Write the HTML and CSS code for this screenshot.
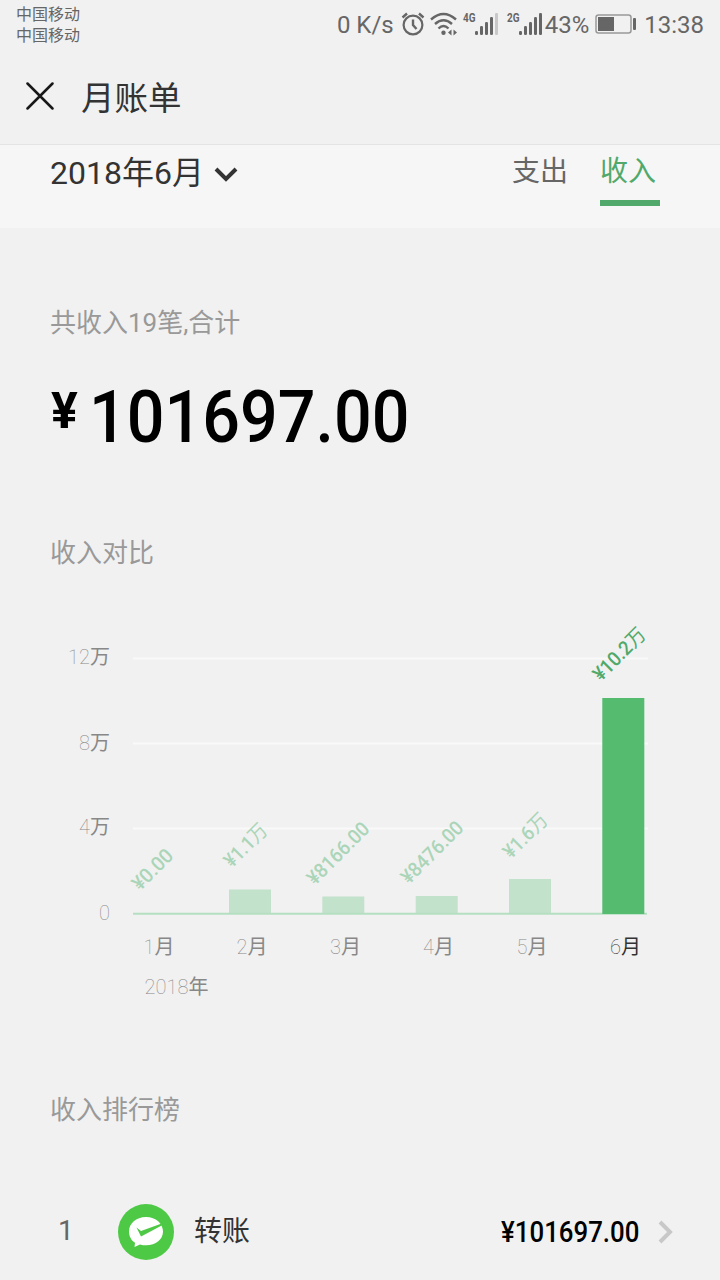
FILE: index.html
```html
<!DOCTYPE html>
<html lang="zh-CN">
<head>
    <meta charset="utf-8">
    <title>月账单</title>
    <link rel="stylesheet" href="styles.css">
</head>
<body>
<div class="status">
    <div class="carriers">中国移动<br>中国移动</div>
    <div class="indicators">
        <span class="speed">0 K/s</span>
        <svg class="alarm" width="24" height="26" viewBox="0 0 24 26" fill="none" stroke="#666" stroke-width="2.2">
            <circle cx="12" cy="14" r="9.4"/>
            <path d="M12 8.5V14l3.5 4M1.5 6.5l4.5-4M22.5 6.5l-4.5-4" stroke-width="2.4"/>
        </svg>
        <svg class="wifi" width="28" height="26" viewBox="0 0 28 26" fill="none" stroke="#666" stroke-width="2.4">
            <path d="M1 8.5Q13.5-2.5 26 8.5M5 13Q13.5 5.5 22 13M8.5 17.5Q13.5 12.5 18.5 17.5"/>
            <circle cx="13.5" cy="21.8" r="2.2" fill="#666" stroke="none"/>
            <path d="M18 21.5l3.5-3v6zM27 21.5l-3.5-3v6z" fill="#666" stroke="none"/>
        </svg>
        <svg class="signal" width="38" height="26" viewBox="0 0 38 26" fill="#666">
            <text class="net" x="1" y="11" textLength="12.5" lengthAdjust="spacingAndGlyphs">4G</text>
            <rect x="13" y="20" width="3" height="4" rx="1.2"/>
            <rect x="18" y="15" width="3" height="9" rx="1.2"/>
            <rect x="23" y="11" width="3" height="13" rx="1.2"/>
            <rect x="28" y="6" width="3" height="18" rx="1.2"/>
            <rect x="33" y="2" width="3" height="22" rx="1.2" fill="#c8c8c8"/>
        </svg>
        <svg class="signal signal-2g" width="38" height="26" viewBox="0 0 38 26" fill="#666">
            <text class="net" x="1" y="11" textLength="12.5" lengthAdjust="spacingAndGlyphs">2G</text>
            <rect x="13" y="20" width="3" height="4" rx="1.2"/>
            <rect x="18" y="15" width="3" height="9" rx="1.2"/>
            <rect x="23" y="11" width="3" height="13" rx="1.2"/>
            <rect x="28" y="6" width="3" height="18" rx="1.2"/>
            <rect x="33" y="2" width="3" height="22" rx="1.2"/>
        </svg>
        <span class="percent">43%</span>
        <svg class="battery" width="42" height="20" viewBox="0 0 42 20">
            <rect x="1" y="1" width="35" height="18" rx="2.5" fill="none" stroke="#999" stroke-width="1.5"/>
            <rect x="3" y="3" width="16" height="14" fill="#666"/>
            <rect x="38" y="4" width="3" height="12" rx="1" fill="#666"/>
        </svg>
        <span class="clock">13:38</span>
    </div>
</div>

<div class="titlebar">
    <svg class="close" width="28" height="28" viewBox="0 0 28 28" fill="none" stroke="#181818" stroke-width="2.5" stroke-linecap="round">
        <path d="M1.5 1.5l25 25M26.5 1.5l-25 25"/>
    </svg>
    <h1>月账单</h1>
</div>

<div class="filter">
    <div class="month">
        <span>2018年6月</span>
        <svg width="24" height="16" viewBox="0 0 24 16" fill="none" stroke="#333" stroke-width="4">
            <path d="M2 3l10 10L22 3"/>
        </svg>
    </div>
    <div class="tabs">
        <span class="tab">支出</span>
        <span class="tab active">收入</span>
    </div>
</div>

<div class="summary">
    <div class="label">共收入19笔,合计</div>
    <div class="total"><span class="currency">¥</span><span class="number">101697.00</span></div>
</div>

<div class="compare">
    <div class="label">收入对比</div>
    <svg class="chart" width="620" height="400" viewBox="50 610 620 400">
        <g class="grid">
            <path d="M133 658.5H648M133 743.5H648M133 828.5H648"/>
        </g>
        <g class="axis" text-anchor="end">
            <text x="110" y="664">12<tspan>万</tspan></text>
            <text x="110" y="750">8<tspan>万</tspan></text>
            <text x="110" y="834">4<tspan>万</tspan></text>
            <text x="110" y="920">0</text>
        </g>
        <g class="bars">
            <rect x="229" y="889.5" width="42" height="24"/>
            <rect x="322.3" y="896.5" width="42" height="17"/>
            <rect x="415.7" y="896" width="42" height="17.5"/>
            <rect x="509" y="879" width="42" height="34.5"/>
            <path class="baseline" d="M133 913.8H647"/>
            <rect class="current" x="602.3" y="698" width="42" height="216"/>
        </g>
        <g class="values">
            <text transform="translate(140 891.5) rotate(-45)" textLength="49" lengthAdjust="spacingAndGlyphs">¥0.00</text>
            <text transform="translate(232 868.5) rotate(-45)" textLength="52" lengthAdjust="spacingAndGlyphs">¥1.1<tspan>万</tspan></text>
            <text transform="translate(315 886) rotate(-45)" textLength="79" lengthAdjust="spacingAndGlyphs">¥8166.00</text>
            <text transform="translate(409 885) rotate(-45)" textLength="79" lengthAdjust="spacingAndGlyphs">¥8476.00</text>
            <text transform="translate(511 859.5) rotate(-45)" textLength="54" lengthAdjust="spacingAndGlyphs">¥1.6<tspan>万</tspan></text>
            <text class="current" transform="translate(601 682) rotate(-45)" textLength="65" lengthAdjust="spacingAndGlyphs">¥10.2<tspan>万</tspan></text>
        </g>
        <g class="axis" text-anchor="middle">
            <text x="159" y="954">1<tspan>月</tspan></text>
            <text x="252" y="954">2<tspan>月</tspan></text>
            <text x="345.5" y="954">3<tspan>月</tspan></text>
            <text x="438.5" y="954">4<tspan>月</tspan></text>
            <text x="532" y="954">5<tspan>月</tspan></text>
            <text class="current" x="625.5" y="954">6<tspan>月</tspan></text>
            <text x="176.5" y="994">2018<tspan>年</tspan></text>
        </g>
    </svg>
</div>

<div class="ranking">
    <div class="label">收入排行榜</div>
    <div class="row">
        <span class="rank">1</span>
        <svg class="logo" width="56" height="56" viewBox="0 0 56 56">
            <circle cx="28" cy="28" r="28" fill="#4ec945"/>
            <path d="M28 13C18 13 11 19.5 11 27.5c0 5 2.3 8.8 6 11.2L16.5 43l5.5-2.6c2 .6 4 .9 6 .9 10 0 17-6 17-13.8S38 13 28 13z" fill="#fff"/>
            <path d="M18.5 23.5l4.5 3.6L43 19.8l1.2 1.5L23 32.5z" fill="#4ec945"/>
        </svg>
        <span class="name">转账</span>
        <span class="amount">¥101697.00</span>
        <svg class="arrow" width="16" height="24" viewBox="0 0 16 24" fill="none" stroke="#c8c8c8" stroke-width="4">
            <path d="M2 2l10 10L2 22"/>
        </svg>
    </div>
</div>
</body>
</html>
```
FILE: styles.css
```css
html, body {
    padding:0;
    margin:0;
    background:#f1f1f1;
    overflow:hidden;
    font-family: Roboto, "Noto Sans CJK SC", sans-serif;
    color:#333;
}

svg {
    display:block;
    flex:none;
}

.status {
    display:flex;
    justify-content:space-between;
    height:48px;
    color:#666;
}

.carriers {
    padding:4px 0 0 16px;
    font-size:16px;
    line-height:21px;
}

.indicators {
    display:flex;
    align-items:center;
    height:48px;
    padding-right:16px;
    font-size:24px;
    white-space:nowrap;
}

.speed, .percent, .clock {
    padding-top:2px;
}

.alarm {
    margin:0 5px 1px 7px;
}

.wifi {
    margin:0 4px 1px 0;
}

.signal-2g {
    margin:0 1px 0 6px;
}

.net {
    font-size:12px;
    font-weight:700;
}

.battery {
    margin:0 7px 0 6px;
}

.titlebar {
    display:flex;
    align-items:center;
    height:96px;
    padding-left:26px;
    border-bottom:1px solid #e4e4e4;
}

h1 {
    margin:6px 0 0 27px;
    font-size:33.5px;
    font-weight:400;
    line-height:48px;
}

.filter {
    display:flex;
    justify-content:space-between;
    height:83px;
    padding:0 60px 0 50px;
    background:#f6f6f6;
}

.month {
    display:flex;
    align-items:center;
    gap:10px;
    height:57px;
    font-size:32px;
    line-height:48px;
}

.month span {
    padding-bottom:2px;
}

.tabs {
    display:flex;
    gap:28px;
}

.tab {
    box-sizing:border-box;
    width:60px;
    height:61px;
    font-size:28px;
    line-height:53px;
    color:#666;
}

.tab.active {
    border-bottom:6px solid #50a96a;
    color:#50a96a;
}

.label {
    font-size:26px;
    line-height:42px;
    color:#999;
}

.summary {
    padding:74px 50px 0;
}

.total {
    display:flex;
    align-items:flex-start;
    height:84px;
    margin-top:31px;
    color:#000;
    font-weight:500;
}

.currency {
    width:38px;
    padding-left:1px;
    font-size:50px;
    font-weight:700;
    line-height:73px;
}

/* narrow numerals */
.number {
    font-size:73px;
    line-height:84px;
    transform:scaleX(.91);
    transform-origin:left;
}

.compare {
    padding:73px 50px 0;
}

.chart {
    margin-top:36px;
}

.grid path {
    stroke:#f9f9f9;
    stroke-width:2;
}

.axis text {
    font-size:20px;
    font-weight:100;
    fill:#888;
}

.axis tspan {
    font-weight:400;
}

.axis text.current {
    fill:#333;
}

.bars rect {
    fill:#c3e2cc;
}

.bars .current {
    fill:#54bb6f;
}

.baseline {
    stroke:#b5dfc1;
    stroke-width:2;
}

.values text {
    font-size:20px;
    font-weight:500;
    fill:#abd5b8;
}

.values tspan {
    font-weight:400;
}

.values .current {
    fill:#50a96a;
}

.ranking {
    padding:79px 46px 0 50px;
}

.row {
    display:flex;
    align-items:center;
    height:56px;
    margin-top:73px;
}

.rank {
    width:68px;
    padding-bottom:3px;
    text-indent:8px;
    font-size:28px;
    color:#666;
}

.name {
    flex:1;
    padding-left:20px;
    font-size:28px;
    line-height:52px;
}

.amount {
    font-size:29px;
    font-weight:500;
    color:#000;
    transform:scaleX(.89);
    transform-origin:right;
}

.arrow {
    margin-left:19px;
}
```
